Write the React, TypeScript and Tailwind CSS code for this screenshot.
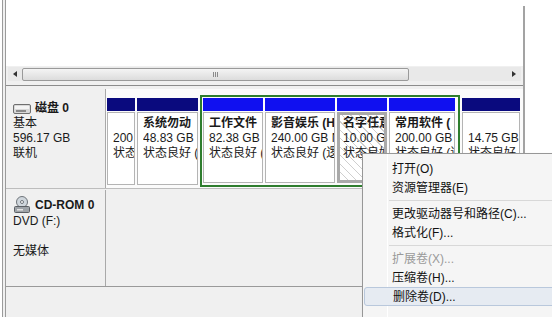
import React from 'react';

type Part = {
  w: string;
  bar: string;
  name?: string;
  size: string;
  status: string;
  selected?: boolean;
};

const NAVY = 'bg-[#0a0a7e]';
const BLUE = 'bg-[#1010f0]';

const logical: Part[] = [
  { w: 'w-[60px]', bar: BLUE, name: '工作文件', size: '82.38 GB', status: '状态良好 (' },
  { w: 'w-[70px]', bar: BLUE, name: '影音娱乐 (H', size: '240.00 GB N', status: '状态良好 (逻' },
  { w: 'w-[50px]', bar: BLUE, name: '名字任意', size: '10.00 GB', status: '状态良好', selected: true },
  { w: 'w-[66px]', bar: BLUE, name: '常用软件 (', size: '200.00 GB', status: '状态良好 (逻' },
];

const PartBox: React.FC<{ p: Part; className?: string }> = ({ p, className = '' }) => (
  <div className={`${p.w} flex flex-col shrink-0 ${className}`}>
    <div className={`h-[13px] ${p.bar}`} />
    <div
      className={`mt-[1px] flex-1 overflow-hidden whitespace-nowrap text-[12px] leading-[15px] text-[#1a1a1a] ${
        p.selected
          ? 'border-[3px] border-[#a9a9a9] pl-[3px] pt-[1px] bg-[repeating-linear-gradient(45deg,#ffffff_0px,#ffffff_5px,#cfcfcf_5px,#cfcfcf_6px)]'
          : 'border border-[#b4b4b4] bg-white pl-[5px] pt-[3px]'
      }`}
    >
      <div className="font-bold h-[15px] overflow-hidden">{p.name ?? ''}</div>
      <div className="overflow-hidden">{p.size}</div>
      <div className="overflow-hidden">{p.status}</div>
    </div>
  </div>
);

const DiskIcon = () => (
  <svg width="18" height="10" viewBox="0 0 18 10" className="shrink-0">
    <rect x="0.5" y="0.5" width="17" height="9" rx="1.5" fill="#d9d9d9" stroke="#6f6f6f" />
    <rect x="2" y="2" width="14" height="3" fill="#f4f4f4" />
    <rect x="3" y="6" width="10" height="2" fill="#8a8a8a" />
  </svg>
);

const CdIcon = () => (
  <svg width="18" height="18" viewBox="0 0 18 18" className="shrink-0">
    <circle cx="9" cy="6" r="5.5" fill="#cfd6dc" stroke="#6e747a" />
    <circle cx="9" cy="6" r="1.5" fill="#ffffff" stroke="#6e747a" />
    <rect x="1.5" y="10.5" width="15" height="6" rx="1" fill="#9ea3a8" stroke="#5c6065" />
    <rect x="4" y="13" width="6" height="1.5" fill="#e4e4e4" />
  </svg>
);

const MenuItem: React.FC<{ label: string; disabled?: boolean; hot?: boolean }> = ({ label, disabled, hot }) => (
  <div
    className={`h-[19px] flex items-center pl-[28px] mx-[1px] ${
      hot ? 'bg-[#e6ebf2] border border-[#b9c8dc] rounded-[3px] pl-[27px]' : ''
    } ${disabled ? 'text-[#9a9a9a]' : 'text-[#111]'}`}
  >
    {label}
  </div>
);

const MenuSep = () => (
  <div className="h-[7px] flex items-center pl-[26px]">
    <div className="h-px flex-1 bg-[#d8d8d8]" />
  </div>
);

export default function App() {
  return (
    <div className="relative w-[552px] h-[317px] overflow-hidden bg-white flex font-['Liberation_Sans','Noto_Sans_CJK_SC',sans-serif] text-[12px] text-[#1a1a1a]">
      {/* left frame */}
      <div className="w-[6px] h-full flex pl-[2px]">
        <div className="w-[4px] h-full border-x border-[#9b9b9b] bg-[#f0f0f0]" />
      </div>

      {/* main pane */}
      <div className="w-[519px] h-full flex flex-col pt-[6px]">
        <div className="flex-1 flex flex-col border-r-2 border-[#a3a3a3]">
          <div className="h-[60px] bg-white" />

          {/* horizontal scrollbar */}
          <div className="h-[20px] bg-[#f0f0f0] border-b border-[#8c8c8c] flex items-start pt-[1px]">
            <div className="h-[14px] flex-1 flex items-center bg-[#e9e9e9] mx-[2px]">
              <div className="w-[14px] flex justify-center">
                <div className="w-0 h-0 border-y-[3px] border-y-transparent border-r-[4px] border-r-[#333]" />
              </div>
              <div className="w-[387px] h-[13px] rounded-[2px] border border-[#9a9a9a] bg-[linear-gradient(#f4f4f4,#dcdcdc)] flex items-center justify-center">
                <div className="flex gap-[1px]">
                  <div className="w-px h-[5px] bg-[#8a8a8a]" />
                  <div className="w-px h-[5px] bg-[#8a8a8a]" />
                  <div className="w-px h-[5px] bg-[#8a8a8a]" />
                </div>
              </div>
              <div className="flex-1" />
              <div className="w-[14px] flex justify-center">
                <div className="w-0 h-0 border-y-[3px] border-y-transparent border-l-[4px] border-l-[#333]" />
              </div>
            </div>
          </div>

          <div className="flex-1 flex flex-col bg-[#f0f0f0] pt-[3px]">
            {/* disk 0 row */}
            <div className="h-[100px] flex border-b border-[#bdbdbd]">
              <div className="w-[100px] shrink-0 border-r border-[#a9a9a9] bg-[#f0f0f0] pl-[7px] pt-[12px] leading-[15px]">
                <div className="flex items-center gap-[4px] font-bold">
                  <DiskIcon />
                  <span>磁盘 0</span>
                </div>
                <div>基本</div>
                <div>596.17 GB</div>
                <div>联机</div>
              </div>
              <div className="flex-1 bg-[#fbfbfb] flex items-start gap-[2px] pl-[1px] pt-[6px]">
                <PartBox className="h-[87px] mt-[3px]" p={{ w: 'w-[28px]', bar: NAVY, size: '200', status: '状态' }} />
                <PartBox className="h-[87px] mt-[3px]" p={{ w: 'w-[61px]', bar: NAVY, name: '系统勿动', size: '48.83 GB', status: '状态良好 (' }} />
                <div className="h-[92px] w-[260px] shrink-0 border-2 border-[#2e7d2e] p-[1px] pb-[2px] flex gap-[2px]">
                  {logical.map((p) => (
                    <PartBox key={p.size + p.w} p={p} />
                  ))}
                </div>
                <PartBox className="h-[87px] mt-[3px]" p={{ w: 'w-[58px]', bar: NAVY, size: '14.75 GB', status: '状态良好' }} />
              </div>
            </div>

            {/* CD-ROM row */}
            <div className="h-[97px] flex border-b border-[#9a9a9a] mt-[1px]">
              <div className="w-[100px] shrink-0 border-r border-[#a9a9a9] pl-[7px] pt-[6px] leading-[15px]">
                <div className="flex items-center gap-[4px] font-bold">
                  <CdIcon />
                  <span>CD-ROM 0</span>
                </div>
                <div>DVD (F:)</div>
                <div className="h-[15px]" />
                <div>无媒体</div>
              </div>
              <div className="flex-1" />
            </div>
            <div className="flex-1" />
          </div>
        </div>
      </div>

      <div className="flex-1 bg-white" />

      {/* context menu */}
      <div className="absolute left-[362px] top-[153px] w-[200px] h-[170px] bg-[#f5f5f5] border border-[#979797] pt-[5px] shadow-[2px_2px_3px_rgba(0,0,0,0.2)]">
        <div className="absolute left-[24px] top-0 bottom-0 w-px bg-[#e2e2e2] border-r border-white" />
        <div className="relative">
          <MenuItem label="打开(O)" />
          <MenuItem label="资源管理器(E)" />
          <MenuSep />
          <MenuItem label="更改驱动器号和路径(C)..." />
          <MenuItem label="格式化(F)..." />
          <MenuSep />
          <MenuItem label="扩展卷(X)..." disabled />
          <MenuItem label="压缩卷(H)..." />
          <MenuItem label="删除卷(D)..." hot />
        </div>
      </div>
    </div>
  );
}
